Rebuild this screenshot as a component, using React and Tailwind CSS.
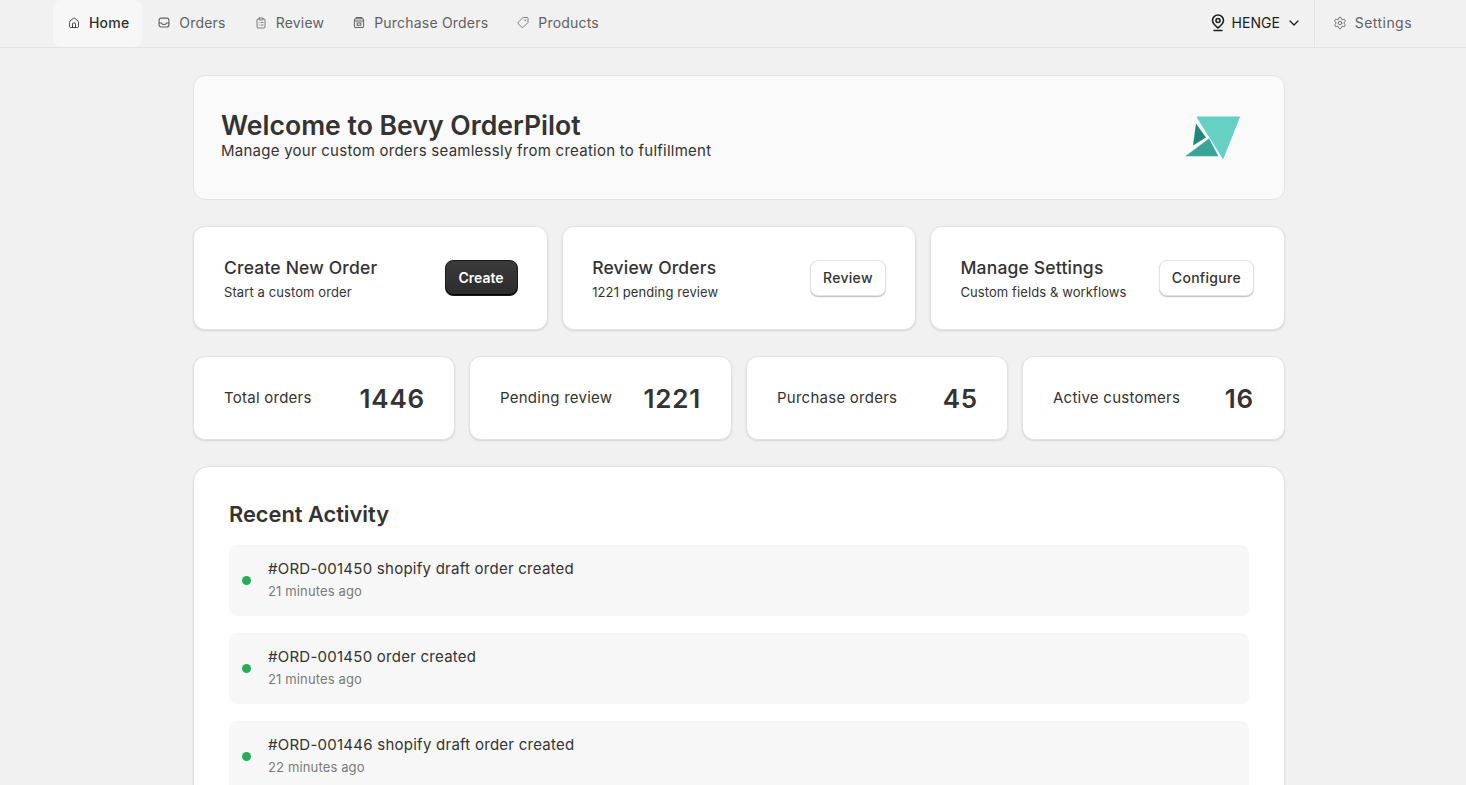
import React from "react";
import { House, ClipboardList, Tag, ChevronDown, Settings } from "lucide-react";

const font = { fontFamily: "Inter, sans-serif" };

function OrdersIcon() {
  return (
    <svg width="13" height="13" viewBox="0 0 13 13" fill="none" stroke="currentColor" strokeWidth="1.200" strokeLinecap="round" strokeLinejoin="round">
      <rect x="1.200" y="1.800" width="10.600" height="9.600" rx="2.200" />
      <path d="M1.200 7h2.600c.4 1.100 1.400 1.700 2.700 1.700S8.800 8.100 9.200 7h2.600" />
    </svg>
  );
}

function PurchaseIcon() {
  return (
    <svg width="13" height="13" viewBox="0 0 13 13" fill="none" stroke="currentColor" strokeWidth="1.100">
      <rect x="1.500" y="2.500" width="10" height="9.500" rx="1.500" />
      <path d="M3.500 2.500V1.200h6v1.300M1.500 5h10" />
      <rect x="4.500" y="7" width="4" height="2.500" />
    </svg>
  );
}

function PinIcon() {
  return (
    <svg width="16" height="18" viewBox="0 0 16 18" fill="none" stroke="currentColor" strokeWidth="1.600" strokeLinecap="round" strokeLinejoin="round">
      <path d="M8 14C5.500 11.800 2.500 9.500 2.500 6.500a5.500 5.500 0 0 1 11 0C13.500 9.500 10.500 11.800 8 14Z" />
      <circle cx="8" cy="6.500" r="2" />
      <path d="M4 16.500h8" />
    </svg>
  );
}

function Logo() {
  return (
    <svg width="56" height="44" viewBox="0 0 56 44">
      <path d="M12 1H54.500L38 42.500Z" fill="#66d0c5" stroke="#66d0c5" strokeWidth="1" strokeLinejoin="round" />
      <path d="M11 7.500L21 21.500L8 29.500Z" fill="#22867c" />
      <path d="M1 40L24 22.800L33 40Z" fill="#38a598" stroke="#38a598" strokeWidth="0.500" strokeLinejoin="round" />
    </svg>
  );
}

function NavItem({ icon, label, active }) {
  return (
    <div className={`flex items-center gap-[9px] h-[47px] pb-0.5 pl-[15px] pr-[13px] text-sm tracking-[0.2px] rounded-lg ${active ? "bg-[#f7f7f7] text-[#303030] font-medium" : "text-[#616161] font-normal"}`}>
      <span className="flex items-center justify-center w-3 h-3">{icon}</span>
      <span>{label}</span>
    </div>
  );
}

function ActionCard({ title, sub, btn, primary, pad }) {
  return (
    <div className={`flex-1 flex items-center justify-between h-[104px] ${pad} bg-white border border-[#e3e3e3] rounded-xl shadow-[0_1px_2px_rgba(0,0,0,0.12)]`}>
      <div className="pt-0.5">
        <div className="text-[17.500px] leading-6 font-medium text-[#333] tracking-[0.18px]">{title}</div>
        <div className="text-[13px] leading-5 mt-0.5 text-[#333] tracking-[0.1px]">{sub}</div>
      </div>
      <button className={primary
        ? "h-9 px-[13px] rounded-lg border border-[#1a1a1a] bg-gradient-to-b from-[#3a3a3a] to-[#2c2c2c] text-white text-sm font-semibold shadow-[inset_0_-1px_0_#000]"
        : "h-9 px-3 rounded-lg border border-[#e3e3e3] bg-white text-[#333] text-sm font-medium tracking-[0.3px] shadow-[0_1px_1px_rgba(0,0,0,0.25)]"}>
        {btn}
      </button>
    </div>
  );
}

function Stat({ label, value, pad }) {
  return (
    <div className={`flex-1 flex items-center justify-between h-[84px] ${pad} bg-white border border-[#e3e3e3] rounded-xl shadow-[0_1px_2px_rgba(0,0,0,0.12)]`}>
      <span className="text-[15px] text-[#333] tracking-[0.25px]">{label}</span>
      <span className="text-[26px] font-semibold text-[#333] tracking-[0.8px]">{value}</span>
    </div>
  );
}

function Activity({ title, time }) {
  return (
    <div className="flex items-center gap-[17px] h-[71px] pl-[13px] bg-[#f7f7f7] rounded-lg">
      <span className="w-[9px] h-[9px] rounded-full bg-[#29ab57]" />
      <div className="pb-0.5">
        <div className="text-[15px] leading-[22px] text-[#333] tracking-[0.25px]">{title}</div>
        <div className="text-[13px] leading-5 mt-px text-[#7a7a7a] tracking-[0.14px]">{time}</div>
      </div>
    </div>
  );
}

export default function App() {
  return (
    <div style={font} className="h-screen overflow-hidden bg-[#f1f1f1] text-[#333]">
      <nav className="flex items-center justify-between h-[48px] border-b border-[#e3e3e3] pl-[53px]">
        <div className="flex items-center gap-px">
          <NavItem active icon={<House size={14} strokeWidth={1.7} />} label="Home" />
          <NavItem icon={<OrdersIcon />} label="Orders" />
          <NavItem icon={<ClipboardList size={14} strokeWidth={1.6} />} label="Review" />
          <NavItem icon={<PurchaseIcon />} label="Purchase Orders" />
          <NavItem icon={<Tag size={13} strokeWidth={1.6} className="-scale-x-100" />} label="Products" />
        </div>
        <div className="flex items-center h-full">
          <div className="flex items-center gap-1.5 pr-3 text-sm text-[#202020] -mt-0.5">
            <PinIcon />
            <span>HENGE</span>
            <ChevronDown size={16} strokeWidth={2} />
          </div>
          <div className="flex items-center gap-2 h-full pb-0.5 border-l border-[#e3e3e3] pl-[18px] pr-[54px] text-sm tracking-[0.45px] text-[#616161]">
            <Settings size={14} strokeWidth={1.5} />
            <span>Settings</span>
          </div>
        </div>
      </nav>

      <main className="w-[1092px] ml-[193px] pt-[27px] flex flex-col gap-[26px]">
        <section className="flex items-center justify-between h-[125px] pl-[27px] pr-[43px] bg-[#fafafa] border border-[#e3e3e3] rounded-xl">
          <div>
            <h1 className="text-[26.600px] leading-7 font-semibold text-[#333] mt-[-4px]">Welcome to Bevy OrderPilot</h1>
            <p className="text-[15px] leading-5 text-[#333] tracking-[0.25px] mt-0.5">Manage your custom orders seamlessly from creation to fulfillment</p>
          </div>
          <Logo />
        </section>

        <section className="flex gap-[14px]">
          <ActionCard pad="pl-[30px] pr-[29px]" title="Create New Order" sub="Start a custom order" btn="Create" primary />
          <ActionCard pad="pl-[29.600px] pr-[29.600px]" title="Review Orders" sub="1221 pending review" btn="Review" />
          <ActionCard pad="pl-[29px] pr-[30px]" title="Manage Settings" sub="Custom fields & workflows" btn="Configure" />
        </section>

        <section className="flex gap-[14px]">
          <Stat pad="pl-[30px] pr-[29px]" label="Total orders" value="1446" />
          <Stat pad="pl-[30px] pr-[30px]" label="Pending review" value="1221" />
          <Stat pad="pl-[30px] pr-[29px]" label="Purchase orders" value="45" />
          <Stat pad="pl-[30px] pr-[30px]" label="Active customers" value="16" />
        </section>

        <section className="bg-white border border-[#e3e3e3] rounded-2xl pt-[33px] px-[35px] pb-8 shadow-[0_1px_2px_rgba(0,0,0,0.12)]">
          <h2 className="text-[21.800px] leading-7 font-semibold text-[#333] mb-[17px]">Recent Activity</h2>
          <div className="flex flex-col gap-[17px]">
            <Activity title="#ORD-001450 shopify draft order created" time="21 minutes ago" />
            <Activity title="#ORD-001450 order created" time="21 minutes ago" />
            <Activity title="#ORD-001446 shopify draft order created" time="22 minutes ago" />
          </div>
        </section>
      </main>
    </div>
  );
}
